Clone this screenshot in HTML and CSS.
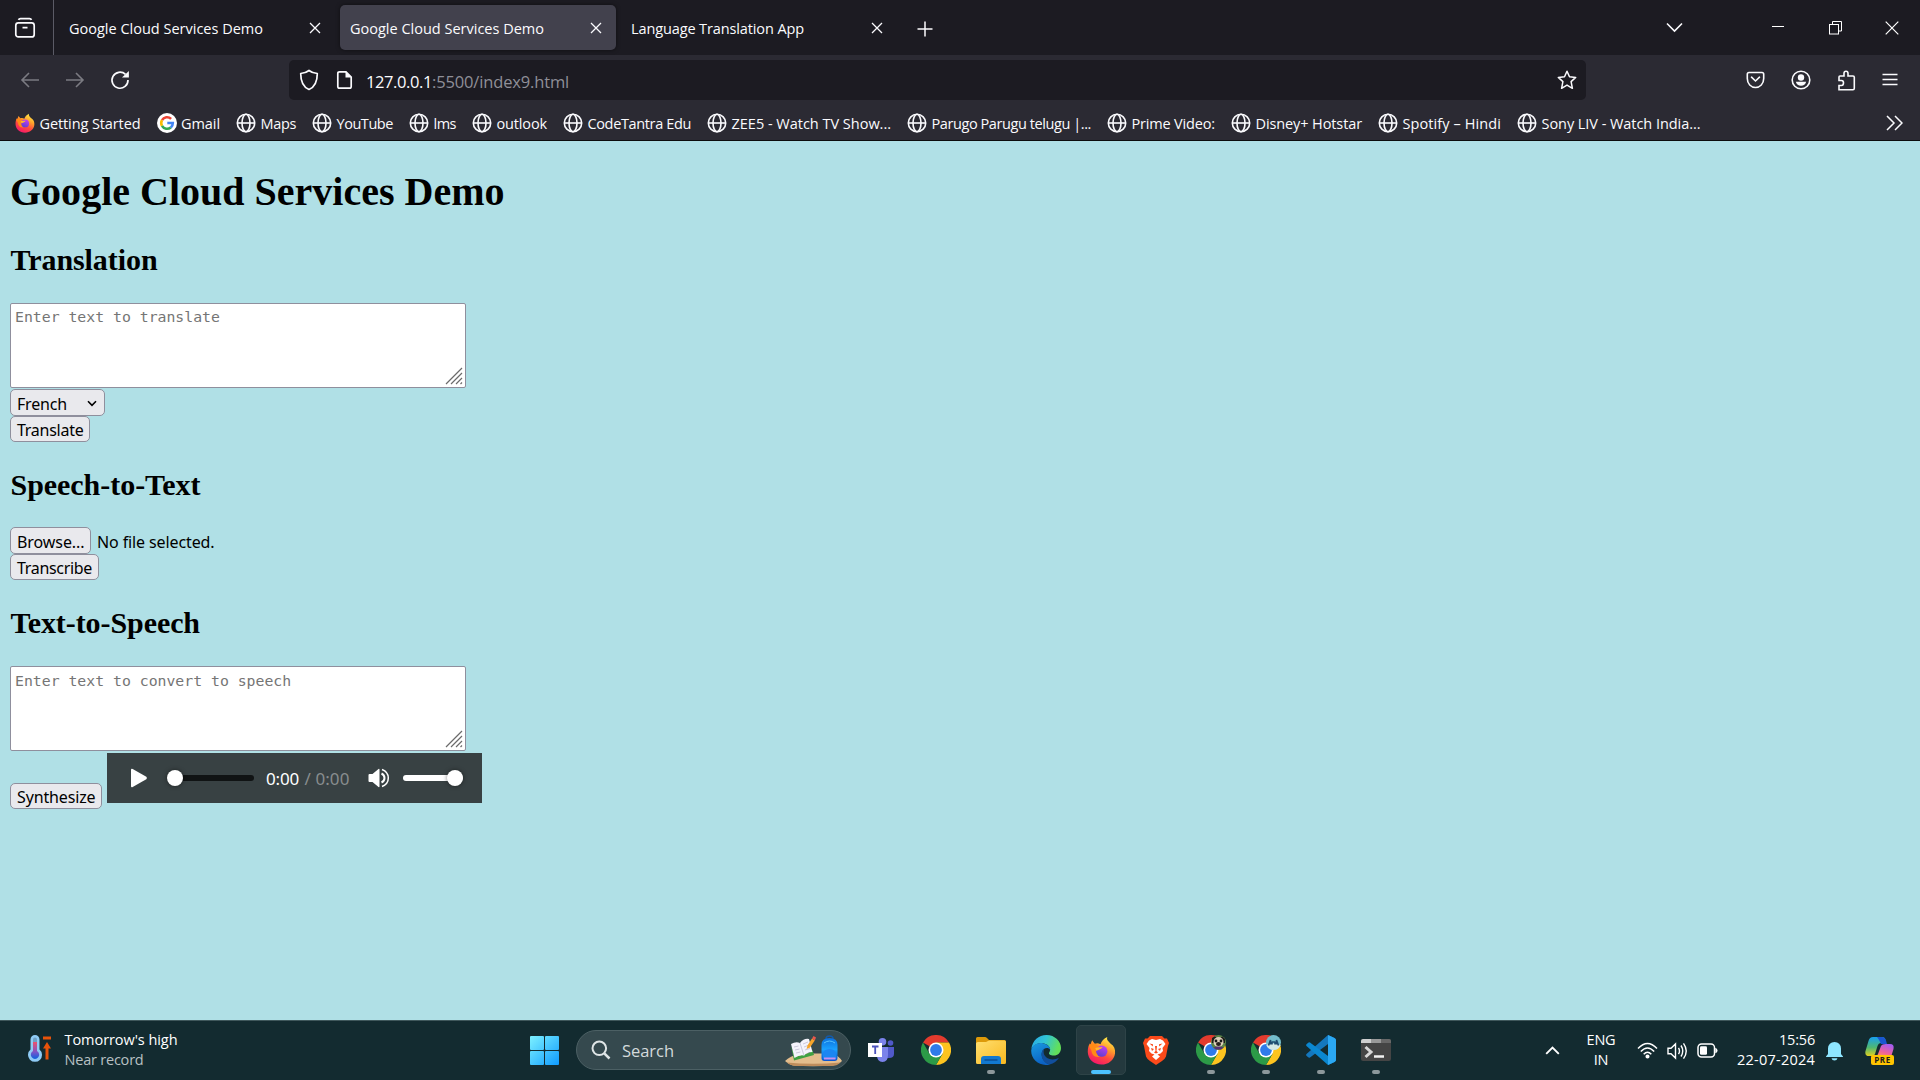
FILE: index.html
```html
<!DOCTYPE html>
<html lang="en">
<head>
<meta charset="utf-8">
<title>Google Cloud Services Demo</title>
<link rel="stylesheet" href="styles.css">
</head>
<body>
<svg class="defs" width="0" height="0" aria-hidden="true">
  <defs>
    <linearGradient id="ffBody" x1="0.8" y1="0" x2="0.3" y2="1"><stop offset="0" stop-color="#fff44f"/><stop offset="0.35" stop-color="#ffa42b"/><stop offset="0.65" stop-color="#ff4b3e"/><stop offset="1" stop-color="#f5156c"/></linearGradient>
    <linearGradient id="ffCore" x1="0.7" y1="0" x2="0.3" y2="1"><stop offset="0" stop-color="#c43df0"/><stop offset="1" stop-color="#5b3fd0"/></linearGradient>
    <linearGradient id="winFill" gradientUnits="userSpaceOnUse" x1="0" y1="0" x2="29" y2="29"><stop offset="0" stop-color="#7df1ff"/><stop offset="1" stop-color="#0f9bff"/></linearGradient>
    <linearGradient id="folderFill" x1="0" y1="0" x2="1" y2="1"><stop offset="0" stop-color="#ffdf70"/><stop offset="1" stop-color="#f9b91f"/></linearGradient>
    <linearGradient id="edgeTop" x1="0" y1="0" x2="1" y2="0.3"><stop offset="0" stop-color="#28a8e8"/><stop offset="0.5" stop-color="#31c4d6"/><stop offset="1" stop-color="#62e05a"/></linearGradient>
    <linearGradient id="edgeLow" x1="0" y1="0" x2="0.4" y2="1"><stop offset="0" stop-color="#1a9be0"/><stop offset="1" stop-color="#0b62c4"/></linearGradient>
    <linearGradient id="thermo" x1="0" y1="0" x2="0" y2="1"><stop offset="0" stop-color="#f0506a"/><stop offset="0.6" stop-color="#7a55c8"/><stop offset="1" stop-color="#0a62e0"/></linearGradient>
    <linearGradient id="pilotA" x1="0" y1="0" x2="0" y2="1"><stop offset="0" stop-color="#18a0f0"/><stop offset="0.55" stop-color="#4fb872"/><stop offset="1" stop-color="#e0d020"/></linearGradient>
    <linearGradient id="pilotB" x1="0.7" y1="0" x2="0.2" y2="1"><stop offset="0" stop-color="#a45cf0"/><stop offset="0.6" stop-color="#f0629a"/><stop offset="1" stop-color="#ff9a50"/></linearGradient>
    <linearGradient id="bag" x1="0" y1="0" x2="0" y2="1"><stop offset="0" stop-color="#0b6fdc"/><stop offset="0.5" stop-color="#1ba2ff"/><stop offset="1" stop-color="#0a52d0"/></linearGradient>
    <symbol id="globe" viewBox="0 0 20 20"><g fill="none" stroke="#fbfbfe" stroke-width="1.6"><circle cx="10" cy="10" r="8.7"/><ellipse cx="10" cy="10" rx="4" ry="8.7"/><path d="M1.3 10h17.4"/></g></symbol>
    <symbol id="firefox" viewBox="0 0 30 30"><path d="M21 1C20 4 22 5 24.500 8C28 10 29.500 14 29 18C28 25 22 29.500 15 29.500C7 29.500 1 24 .8 16.500C.7 12 2 9 3 7.500V10L5.300 4.500L8 8C10 7.200 12 7.300 14 8.500C15 5 17.500 2.500 21 1Z" fill="url(#ffBody)"/><path d="M2 10C4 7 8 7 11 10L15 11C14 14 11 13 9.500 15C9 18 11 20 14 21C9 23 5 20 4.500 15Z" fill="#ff8a16"/><circle cx="15.300" cy="15.700" r="5.800" fill="url(#ffCore)"/><path d="M8.500 13C10 11 13 12 16 11.500C15.500 13.500 12 14 10 15.500Z" fill="#ffb52e"/></symbol>
    <symbol id="chrome" viewBox="0 0 30 30"><path d="M15 15L2 7.500A15 15 0 0 1 28 7.500H15Z" fill="#e33b2e"/><path d="M15 7.500H28A15 15 0 0 1 15 30L21.500 18.800Z" fill="#fdc41f"/><path d="M2 7.500L8.500 18.800L21.500 18.800L15 30A15 15 0 0 1 2 7.500Z" fill="#2c9a47"/><circle cx="15" cy="15" r="7.500" fill="#fff"/><circle cx="15" cy="15" r="5.900" fill="#2f7bea"/></symbol>
    <symbol id="cross" viewBox="0 0 12 12"><path d="M1 1L11 11M11 1L1 11" fill="none" stroke="#fbfbfe" stroke-width="1.300"/></symbol>
    <symbol id="grip" viewBox="0 0 18 18"><path d="M1 17L17 1M6 17L17 6M11 17L17 11M15.500 17L17 15.500" fill="none" stroke="#6b6b6b" stroke-width="1.200"/></symbol>
  </defs>
</svg>

<header class="browser">
  <div class="tabstrip">
    <div class="view-btn"><svg width="22" height="22" viewBox="0 0 22 22" fill="none" stroke="#fbfbfe" stroke-width="1.700"><rect x="1.800" y="5.900" width="18.400" height="14" rx="2.500"/><path d="M4.500 2.800Q5 1.600 6.500 1.600H15.500Q17 1.600 17.500 2.800M8.500 10.600H13.500"/></svg></div>
    <div class="tab"><span data-w="194">Google Cloud Services Demo</span><svg class="x" width="12" height="12"><use href="#cross"/></svg></div>
    <div class="tab active"><span data-w="194">Google Cloud Services Demo</span><svg class="x" width="12" height="12"><use href="#cross"/></svg></div>
    <div class="tab"><span data-w="173">Language Translation App</span><svg class="x" width="12" height="12"><use href="#cross"/></svg></div>
    <svg class="plus" width="16" height="16" viewBox="0 0 16 16"><path d="M8 .5V15.500M.5 8H15.500" stroke="#fbfbfe" stroke-width="1.500"/></svg>
    <div class="window-btns">
      <svg width="17" height="11" viewBox="0 0 17 11"><path d="M1 1.500L8.500 9L16 1.500" fill="none" stroke="#fbfbfe" stroke-width="1.600"/></svg>
      <svg class="min" width="12" height="14" viewBox="0 0 12 14"><path d="M0 5.500H12" stroke="#fff"/></svg>
      <svg class="restore" width="13" height="14" viewBox="0 0 13 14" fill="none" stroke="#fff"><rect x=".5" y="3.500" width="9" height="9.500"/><path d="M3.500 3.500V.5H12.500V10H9.500"/></svg>
      <svg class="close" width="14" height="14" viewBox="0 0 14 14"><path d="M.7.7L13.300 13.300M13.300.7L.7 13.300" stroke="#fff" stroke-width="1.200"/></svg>
    </div>
  </div>

  <div class="toolbar">
    <svg width="20" height="20" viewBox="0 0 20 20" fill="none" stroke="#7b7b82" stroke-width="1.600"><path d="M19 10H2M9 3L2 10L9 17"/></svg>
    <svg class="fwd" width="20" height="20" viewBox="0 0 20 20" fill="none" stroke="#7b7b82" stroke-width="1.600"><path d="M1 10H18M11 3L18 10L11 17"/></svg>
    <svg class="reload" width="20" height="20" viewBox="0 0 20 20"><path d="M15.500 4.400A8 8 0 1 0 18 10" fill="none" stroke="#fbfbfe" stroke-width="1.700"/><path d="M18.900 1V7.500H12Z" fill="#fbfbfe"/></svg>
    <div class="urlbar">
      <svg width="20" height="22" viewBox="0 0 20 22"><path d="M10 1.500C12.500 3.500 15.500 4.300 18.300 4.500C18.300 12.500 16 18 10 20.500C4 18 1.700 12.500 1.700 4.500C4.500 4.300 7.500 3.500 10 1.500Z" fill="none" stroke="#fbfbfe" stroke-width="1.700" stroke-linejoin="round"/></svg>
      <svg class="doc" width="17" height="20" viewBox="0 0 17 20"><path d="M3.500 1.800H10L15.200 7V16.500Q15.200 18.200 13.500 18.200H3.500Q1.800 18.200 1.800 16.500V3.500Q1.800 1.800 3.500 1.800Z" fill="none" stroke="#fbfbfe" stroke-width="1.700"/><path d="M9.500 1.500V7.500H15.500Z" fill="#fbfbfe"/></svg>
      <span class="host" data-w="66">127.0.0.1</span><span class="path" data-w="137">:5500/index9.html</span>
      <svg class="star" width="20" height="20" viewBox="0 0 20 20"><path d="M10 1.300L12.500 6.700L18.700 7.400L14.100 11.600L15.400 18.300L10 15.100L4.600 18.300L5.900 11.600L1.300 7.400L7.500 6.700Z" fill="none" stroke="#fbfbfe" stroke-width="1.500" stroke-linejoin="round"/></svg>
    </div>
    <div class="actions">
      <svg width="19" height="18" viewBox="0 0 19 18" fill="none" stroke="#fbfbfe" stroke-width="1.600"><path d="M3 1.500H16Q17.700 1.500 17.700 3.200V7.500C17.700 13 14 16.500 9.500 16.500C5 16.500 1.300 13 1.300 7.500V3.200Q1.300 1.500 3 1.500Z"/><path d="M5.500 6.200L9.500 10L13.500 6.200" stroke-linecap="round"/></svg>
      <svg width="20" height="20" viewBox="0 0 20 20"><circle cx="10" cy="10" r="8.800" fill="none" stroke="#fbfbfe" stroke-width="1.600"/><circle cx="10" cy="7.500" r="3.200" fill="#fbfbfe"/><path d="M4.800 11.800H15.200Q14 15.700 10 15.700Q6 15.700 4.800 11.800Z" fill="#fbfbfe"/></svg>
      <svg width="19" height="21" viewBox="0 0 19 21"><path d="M2 19.700V15.500H4.500Q6.500 15.500 6.500 12.800Q6.500 10.500 4.500 10.500H2V7Q2 6 3 6H7V3.300Q7 1.200 9 1.200Q11 1.200 11 3.300V6H16Q17.300 6 17.300 7.300V18.200Q17.300 19.700 16 19.700Z" fill="none" stroke="#fbfbfe" stroke-width="1.600"/></svg>
      <svg width="16" height="14" viewBox="0 0 16 14"><path d="M.5 1.500H15.500M.5 6.500H15.500M.5 11.500H15.500" stroke="#fbfbfe" stroke-width="1.400"/></svg>
    </div>
  </div>

  <nav class="bookmarks">
    <a><svg width="20" height="20"><use href="#firefox"/></svg><span data-w="101">Getting Started</span></a>
    <a><svg width="20" height="20" viewBox="0 0 20 20"><circle cx="10" cy="10" r="10" fill="#fff"/><g fill="none" stroke-width="2.600"><path d="M14.100 5.900A5.800 5.800 0 0 0 5 7.200" stroke="#ea4335"/><path d="M5 7.200A5.800 5.800 0 0 0 5 12.900" stroke="#fbbc05"/><path d="M5 12.900A5.800 5.800 0 0 0 13.800 14.400" stroke="#34a853"/><path d="M13.800 14.400A5.800 5.800 0 0 0 15.800 10H10.300" stroke="#4285f4"/></g></svg><span data-w="39">Gmail</span></a>
    <a><svg width="20" height="20"><use href="#globe"/></svg><span data-w="35.500">Maps</span></a>
    <a><svg width="20" height="20"><use href="#globe"/></svg><span data-w="56.500">YouTube</span></a>
    <a><svg width="20" height="20"><use href="#globe"/></svg><span data-w="22.500">lms</span></a>
    <a><svg width="20" height="20"><use href="#globe"/></svg><span data-w="50.500">outlook</span></a>
    <a><svg width="20" height="20"><use href="#globe"/></svg><span data-w="103.500">CodeTantra Edu</span></a>
    <a><svg width="20" height="20"><use href="#globe"/></svg><span data-w="159.500">ZEE5 - Watch TV Show...</span></a>
    <a><svg width="20" height="20"><use href="#globe"/></svg><span data-w="159.500">Parugo Parugu telugu |...</span></a>
    <a><svg width="20" height="20"><use href="#globe"/></svg><span data-w="83.500">Prime Video:</span></a>
    <a><svg width="20" height="20"><use href="#globe"/></svg><span data-w="106.500">Disney+ Hotstar</span></a>
    <a><svg width="20" height="20"><use href="#globe"/></svg><span data-w="98.500">Spotify – Hindi</span></a>
    <a><svg width="20" height="20"><use href="#globe"/></svg><span data-w="159">Sony LIV - Watch India...</span></a>
    <svg class="more" width="17" height="16" viewBox="0 0 17 16"><path d="M1 1L8 8L1 15M9 1L16 8L9 15" fill="none" stroke="#fbfbfe" stroke-width="1.500"/></svg>
  </nav>
</header>

<main class="page">
  <h1><span data-w="494.500">Google Cloud Services Demo</span></h1>
  <h2><span data-w="147">Translation</span></h2>
  <div class="area"><textarea class="first" placeholder="Enter text to translate"></textarea><svg class="grip" width="18" height="18"><use href="#grip"/></svg></div>
  <button class="ctl select"><span data-w="50">French</span><svg width="10" height="7" viewBox="0 0 10 7"><path d="M1 1.200L5 5.300L9 1.200" fill="none" stroke="#000" stroke-width="1.600"/></svg></button>
  <button class="ctl translate"><span data-w="66.500">Translate</span></button>
  <h2 class="speech"><span data-w="190">Speech-to-Text</span></h2>
  <div class="file"><button class="ctl browse"><span data-w="67.500">Browse...</span></button><span class="status" data-w="117.500">No file selected.</span></div>
  <button class="ctl transcribe"><span data-w="75">Transcribe</span></button>
  <h2><span data-w="189.500">Text-to-Speech</span></h2>
  <div class="area"><textarea placeholder="Enter text to convert to speech"></textarea><svg class="grip" width="18" height="18"><use href="#grip"/></svg></div>
  <div class="synth">
    <button class="ctl synthesize"><span data-w="78.500">Synthesize</span></button>
    <div class="player">
      <svg width="18" height="20" viewBox="0 0 18 20"><path d="M1 2Q1 .3 2.700 1L16.300 8.800Q17.600 10 16.300 11.200L2.700 19Q1 19.700 1 18Z" fill="#fff"/></svg>
      <div class="scrub"><i class="knob"></i></div>
      <span class="now" data-w="33">0:00</span><span class="total" data-w="45">/ 0:00</span>
      <svg class="speaker" width="22" height="20" viewBox="0 0 22 20"><path d="M1.500 6H4.500L10.500 1Q11.500.5 11.500 1.700V18.300Q11.500 19.500 10.500 19L4.500 14H1.500Q.5 14 .5 13V7Q.5 6 1.500 6Z" fill="#fff"/><path d="M13.500 5.500Q16.500 7 16.500 10Q16.500 13 13.500 14.500" fill="none" stroke="#fff" stroke-width="2"/><path d="M14 1.500Q20.300 4 20.300 10Q20.300 16 14 18.500" fill="none" stroke="#fff" stroke-width="1.500"/></svg>
      <div class="volume"><i class="knob"></i></div>
    </div>
  </div>
</main>

<footer class="taskbar">
  <div class="weather">
    <svg width="24" height="30" viewBox="0 0 24 30"><path d="M2.500 5.500A4.500 4.500 0 0 1 11.500 5.500V15.500A7 7 0 1 1 2.500 15.500Z" fill="#8fcbf5"/><rect x="5" y="3.500" width="4" height="8" rx="2" fill="#6fa0c4"/><path d="M5 8H9V17A4.200 4.200 0 1 1 5 17Z" fill="url(#thermo)"/><path d="M15 4H23" stroke="#e8530a" stroke-width="3"/><path d="M19 8L23 14.500H20.500V25.500H17.500V14.500H15Z" fill="#e8530a"/></svg>
    <div class="lines"><span data-w="113">Tomorrow's high</span><span class="dim" data-w="79">Near record</span></div>
  </div>
  <svg class="start" width="29" height="29" viewBox="0 0 29 29" fill="url(#winFill)"><rect width="14" height="14" rx="1"/><rect x="15" width="14" height="14" rx="1"/><rect y="15" width="14" height="14" rx="1"/><rect x="15" y="15" width="14" height="14" rx="1"/></svg>
  <div class="search">
    <svg width="20" height="20" viewBox="0 0 20 20" fill="none" stroke="#dfe5e6" stroke-width="2"><circle cx="8.300" cy="8.300" r="6.800"/><path d="M13.300 13.300L18.500 18.500" stroke-width="2.500"/></svg>
    <span data-w="52">Search</span>
    <svg class="art" width="58" height="32" viewBox="0 0 58 32"><path d="M0 26Q5 21 14 19Q20 18 30 18.500H48Q54 21 57 26Q54 29 48 30.500Q28 32 8 30.500Q3 29 0 26Z" fill="#e3bd8d"/><path d="M1.500 27.500Q28 30 55.500 27.500Q52 31 46 31H10Q5 30 1.500 27.500Z" fill="#bf8d5c"/><path d="M6 11L9 25.500L29 20L27.500 15L24 18L10 22Z" fill="#3fa142"/><path d="M6 9Q11 6 15 8Q19 3 24 4L27.500 17Q22 17 19 20.500Q14 19.500 9.500 23Z" fill="#f4f3fb"/><path d="M15 8L19 20.500M9 12L13.500 11M10 15L14.500 14M11 18L15.500 17M18 9L23 7M19 12L24 10M20 15L25 13.500" stroke="#c6c3d6" stroke-width=".9"/><path d="M21.500 14L22.500 10.500L27 3.500L29.800 5.500L25 12.500Z" fill="#f6a52b"/><path d="M27 3.500L28.500 1L31 2.500L29.800 5.500Z" fill="#e9574c"/><path d="M41 4Q41 1 44.500 1Q48 1 48 4" fill="none" stroke="#145aa8" stroke-width="1.500"/><path d="M36.500 10Q36.500 3 44.500 3Q52.500 3 52.500 10V23Q52.500 26 49.500 26H39.500Q36.500 26 36.500 23Z" fill="url(#bag)"/><path d="M38 20Q38 14 44.500 14Q51 14 51 20V24H38Z" fill="#1c86f2"/><path d="M39 8Q44.500 4 50 8" fill="none" stroke="#58c4ff"/><path d="M39 23.500H50.500" stroke="#c590f0" stroke-width="2"/></svg>
  </div>
  <div class="apps">
    <div class="app"><svg width="26" height="24" viewBox="0 0 26 24"><circle cx="22.500" cy="5" r="2.800" fill="#5059c9"/><path d="M19 9H26V16Q26 20 21 20H19Z" fill="#5059c9"/><circle cx="14.500" cy="3.800" r="3.800" fill="#7b83eb"/><path d="M9 9H20V17Q20 24 14.500 24Q9 24 9 17Z" fill="#7b83eb"/><rect y="5" width="14" height="14" fill="#fff"/><path d="M4 8.500H10.500M7.200 8.500V16" stroke="#4b53bc" stroke-width="1.800"/></svg></div>
    <div class="app"><svg width="30" height="30"><use href="#chrome"/></svg></div>
    <div class="app run"><svg width="30" height="27" viewBox="0 0 30 27"><path d="M0 1.500Q0 0 1.500 0H9Q10 0 11 1L13 3H28.500Q30 3 30 5V10H0Z" fill="#dd9a0a"/><path d="M0 6.500Q0 5 2 5H10L13 3.500H28.500Q30 3.500 30 5V25.500Q30 27 28.500 27H1.500Q0 27 0 25.500Z" fill="url(#folderFill)"/><path d="M5 22Q5 19 8 19H22Q25 19 25 22V27H5Z" fill="#1279d0"/><path d="M8.500 23H21.500" stroke="#0b4f96" stroke-width="1.500"/></svg></div>
    <div class="app"><svg width="30" height="30" viewBox="0 0 30 30"><path d="M.3 14C1.500 5.500 7.500 0 15.500 0C24 0 30 6.500 30 13C30 18 26.500 20.500 23 20.500C19 20.500 17 19 18.500 17C20 14.500 19 10 13 8.500C8 7.500 2.500 9.500.3 14Z" fill="url(#edgeTop)"/><path d="M.2 15.500C1 10 7 7 12.500 8.500C17 9.500 19.500 12.500 19.200 15C17.500 12 12.500 12.500 11 17C9.500 22 13.500 28.500 19 29.400C9 32 0 25 .2 15.500Z" fill="url(#edgeLow)"/><path d="M10.800 17.500C9.500 23.500 14 28.500 18.500 29.500C23 28.500 26 26 28 22.800C22 26 14.500 24.500 12.800 18.500C12.200 16 13 13.800 14 12.800C12.300 13.800 11.300 15.500 10.800 17.500Z" fill="#114f9c"/></svg></div>
    <div class="app current"><svg width="29" height="29"><use href="#firefox"/></svg></div>
    <div class="app"><svg width="26" height="30" viewBox="0 0 26 30"><path d="M7 1H19L21.500 3.500L24 3.500L26 8L25 11L23 21.500Q22 24 19 26L13 30L7 26Q4 24 3 21.500L1 11L0 8L2 3.500L4.500 3.500Z" fill="#fb4a1a"/><path d="M13 5L17 4L20 5.500L22.500 9L19.500 13L20 16L17.500 18.500L14.500 19.500L17 21.500L13 25L9 21.500L11.500 19.500L8.500 18.500L6 16L6.500 13L3.500 9L6 5.500L9 4Z" fill="#fff"/><path d="M6.500 8.500L10 9.200L9.800 11.500ZM19.500 8.500L16 9.200L16.200 11.500ZM8 13L11 14L9 16ZM18 13L15 14L17 16ZM12 11H14L13.500 16L15 17.500L13 18.500L11 17.500L12.500 16Z" fill="#fb4a1a"/></svg></div>
    <div class="app run"><svg width="30" height="30" viewBox="0 0 30 30"><use href="#chrome" width="30" height="30"/><circle cx="22.500" cy="7.500" r="7.500" fill="#5b8446"/><path d="M16 3L18.500 1.500L22.500 3L26.500 1.500L29 4V8H16Z" fill="#1e1d1c"/><ellipse cx="22.500" cy="7" rx="5" ry="5" fill="#dccfb9"/><circle cx="20" cy="6" r="1.400" fill="#171717"/><circle cx="25" cy="6" r="1.400" fill="#171717"/><ellipse cx="22.500" cy="9" rx="2.500" ry="2" fill="#28211e"/><path d="M17.500 12.500Q22.500 10.500 27.500 12.500L25 14.500H20Z" fill="#563273"/></svg></div>
    <div class="app run"><svg width="30" height="30" viewBox="0 0 30 30"><use href="#chrome" width="30" height="30"/><circle cx="22.500" cy="7.500" r="7.500" fill="#74bccb"/><path d="M15.300 10Q22.500 7 29.700 10Q28 15 22.500 15Q17 15 15.300 10Z" fill="#d4e9e7"/><path d="M17.500 10.500L19.500 5V9.500M21 6.500V9.500M27.500 10.500L25.500 5V9.500M24 6.500V9.500M21 7H24" stroke="#1f4c70" stroke-width="1.600" fill="none"/></svg></div>
    <div class="app run"><svg width="30" height="30" viewBox="0 0 30 30"><path d="M22 0L28.500 3Q30 3.800 30 5V8L22 9L4 22.500Q3 23 2.200 22.300L.5 20.800Q-.3 20 .5 19Z" fill="#1477bd"/><path d="M22 30L28.500 27Q30 26.200 30 25V22L22 21L4 7.500Q3 7 2.200 7.700L.5 9.200Q-.3 10 .5 11Z" fill="#0b87d0"/><path d="M22 0L28.500 3Q30 3.800 30 5V25Q30 26.200 28.500 27L22 30Z" fill="#2ba8f3"/></svg></div>
    <div class="app run"><svg width="30" height="22" viewBox="0 0 30 22"><rect width="30" height="22" rx="2" fill="#454545"/><path d="M0 4V2Q0 0 2 0H10V4Z" fill="#cfcfcf"/><path d="M10 0H20V4H10Z" fill="#999"/><path d="M20 0H28Q30 0 30 2V4H20Z" fill="#686868"/><path d="M4.500 8L10 13L4.500 18" fill="none" stroke="#d7d7d7" stroke-width="3"/><path d="M13 17.500H23" stroke="#f2f2f2" stroke-width="2.500"/></svg></div>
  </div>
  <div class="tray">
    <svg class="caret" width="15" height="9" viewBox="0 0 15 9"><path d="M1.200 7.800L7.500 1.500L13.800 7.800" fill="none" stroke="#fff" stroke-width="1.900"/></svg>
    <div class="lang"><span data-w="29">ENG</span><span data-w="14.500">IN</span></div>
    <svg class="wifi" width="21" height="17" viewBox="0 0 21 17" fill="none" stroke="#fff" stroke-width="1.500"><path d="M1 6.500Q10.500-3.500 20 6.500M3.800 9.500Q10.500 2.300 17.200 9.500M6.700 12.300Q10.500 8 14.300 12.300"/><circle cx="10.500" cy="14.500" r="1.300" fill="#fff"/></svg>
    <svg class="sound" width="21" height="18" viewBox="0 0 21 18" fill="none" stroke="#fff" stroke-width="1.400"><path d="M1 6.300H4L8.500 2V16L4 11.700H1ZM11.500 5.800Q13.500 9 11.500 12.200M14 3.500Q17.500 9 14 14.500M16.500 1.300Q22 9 16.500 16.700"/></svg>
    <svg class="battery" width="21" height="15" viewBox="0 0 21 15"><rect x="1" y="1" width="16.500" height="13" rx="3.500" fill="none" stroke="#fff" stroke-width="1.500"/><rect x="3" y="3.300" width="7" height="8.400" rx="1.300" fill="#fff"/><path d="M18.300 5H19Q20.500 6 20.500 7.500Q20.500 9 19 10H18.300Z" fill="#fff"/></svg>
    <div class="clock"><span data-w="36">15:56</span><span data-w="78">22-07-2024</span></div>
    <svg class="bell" width="17" height="20" viewBox="0 0 17 20" fill="#8ee6ff"><path d="M2 13V7.500Q2.500 1 8.500 1Q14.500 1 15 7.500V13L17 15.500V16H0V15.500Z"/><path d="M5.500 17.200H11.500Q11 19.500 8.500 19.500Q6 19.500 5.500 17.200Z"/></svg>
    <div class="copilot">
      <svg width="30" height="29" viewBox="0 0 30 29"><path d="M8 1H17Q20 1 20.500 4L21 7H16Q13.500 7 12.500 10L10 18Q9.500 20 7 20H4Q-.5 20 .5 15L3.500 5Q4.500 1 8 1Z" fill="url(#pilotA)"/><path d="M12 1H17Q20 1 21 4.500L22 8H16Q14.500 4 12 1Z" fill="#1a56d0"/><path d="M21 8H25Q29.500 8 28.500 13L26 21H9Q12 21 13 18L16 10Q17 8 21 8Z" fill="url(#pilotB)"/></svg>
      <span class="pre">PRE</span>
    </div>
  </div>
</footer>
<script src="fit.js"></script>
</body>
</html>
```
FILE: styles.css
```css
* { box-sizing: border-box; }

body {
  margin: 0;
  width: 1920px;
  height: 1080px;
  overflow: hidden;
  display: flex;
  flex-direction: column;
  background: #b0e0e6;
  font-family: "Open Sans", "Noto Sans", sans-serif;
  font-size: 14.5px;
  color: #fbfbfe;
}

svg { display: block; flex: none; }
span { white-space: nowrap; }
.defs { position: absolute; }

/* Browser chrome */
.browser {
  height: 141px;
  flex: none;
  background: #2b2a33;
  border-bottom: 1px solid #0c0c0d;
}
.tabstrip {
  height: 55px;
  display: flex;
  align-items: center;
  background: #1c1b22;
}
.view-btn {
  width: 54px;
  height: 55px;
  padding: 17px 0 0 14px;
  border-right: 1px solid #5b5b66;
}
.tab {
  width: 276px;
  height: 45px;
  margin-left: 5px;
  padding: 0 14px 0 10px;
  display: flex;
  align-items: center;
  justify-content: space-between;
  border-radius: 5px;
}
.tab span { line-height: 20px; padding-top: 3px; }
.active { background: #42414d; box-shadow: 0 0 4px rgba(0, 0, 0, 0.5); }
.plus { margin-left: 20px; margin-top: 2px; }
.window-btns {
  display: flex;
  align-items: center;
  margin-left: auto;
  padding-right: 21px;
}
.min { margin-left: 89px; }
.restore { margin-left: 45px; }
.close { margin-left: 43px; }

.toolbar {
  height: 50px;
  display: flex;
  align-items: center;
  padding-left: 20px;
}
.fwd { margin-left: 25px; }
.reload { margin-left: 25px; }
.urlbar {
  width: 1297px;
  height: 40px;
  margin-left: 159px;
  padding: 0 9px 0 10px;
  display: flex;
  align-items: center;
  border-radius: 5px;
  background: #1c1b22;
  font-size: 16.5px;
}
.doc { margin-left: 17px; }
.host { margin-left: 13px; padding-top: 3px; }
.path { color: #8f8f98; padding-top: 3px; }
.star { margin-left: auto; }
.actions { display: flex; align-items: center; gap: 26px; margin-left: 160px; }
.actions svg:last-child { margin-left: 0; }

.bookmarks {
  height: 35px;
  display: flex;
  align-items: center;
  gap: 16px;
  padding: 1px 17px 0 15px;
}
.bookmarks a { display: flex; align-items: center; gap: 4.5px; }
.more { margin-left: auto; }

/* Demo page */
.page {
  flex: 1;
  padding-left: 10px;
  color: #000;
  font-size: 16px;
  font-family: "Noto Sans", "Open Sans", sans-serif;
}
h1, h2 { font-family: "Liberation Serif", "Times New Roman", serif; }
h1 { margin: 28px 0; font-size: 40px; line-height: 46px; }
h2 { margin: 26px 0; padding-left: 0.5px; font-size: 30px; line-height: 34px; }
.speech { margin-bottom: 25px; }
h1 + h2 { margin-top: 0; }
.area { position: relative; width: 456px; height: 85px; }
textarea {
  display: block;
  width: 456px;
  height: 85px;
  padding: 5px 4px;
  border: 1px solid #8f8f9d;
  border-radius: 2px;
  resize: none;
  background: #fff;
  font: 14.8px/18px "DejaVu Sans Mono", monospace;
}
.first { padding-top: 4px; }
textarea::placeholder { color: #757575; opacity: 1; }
.grip { position: absolute; right: 3px; bottom: 3px; }
.ctl {
  height: 26px;
  display: flex;
  align-items: center;
  justify-content: space-between;
  padding: 1px 7px 0 6px;
  border: 1px solid #8f8f9d;
  border-radius: 5px;
  background: #e9e9ed;
  color: #000;
  font: 16px/22px "Noto Sans", "Open Sans", sans-serif;
}
.select { width: 95px; height: 27px; margin-top: 1px; }
.select span, .browse span, .status { padding-top: 2px; }
.translate { width: 80px; }
.file { height: 27px; display: flex; align-items: center; gap: 6px; }
.browse { width: 81px; height: 27px; }
.transcribe { width: 89px; }
.synthesize { width: 92px; }
.synth {
  height: 56px;
  margin-top: 2px;
  display: flex;
  align-items: flex-end;
  gap: 5px;
}
.player {
  width: 375px;
  height: 50px;
  align-self: flex-start;
  display: flex;
  align-items: center;
  padding-left: 23px;
  background: #384143;
  color: #fff;
  font-size: 17px;
}
.scrub, .volume { height: 6px; border-radius: 3px; display: flex; align-items: center; }
.scrub { width: 87px; margin-left: 19px; background: #101314; }
.volume { width: 60px; margin-left: 13px; background: #fff; justify-content: flex-end; }
.knob { width: 16px; height: 16px; border-radius: 50%; background: #fff; box-shadow: 0 0 4px rgba(0, 0, 0, 0.5); }
.now { margin-left: 12px; }
.total { margin-left: 5.5px; color: #888d8e; }
.speaker { margin-left: 18.5px; }

/* Taskbar */
.taskbar {
  height: 60px;
  flex: none;
  display: flex;
  background: #132b30;
  border-top: 1px solid #40585c;
  font-size: 14.5px;
  color: #fff;
}
.weather { width: 530px; display: flex; padding: 13px 0 0 28px; gap: 12.5px; }
.lines, .lang, .clock { display: flex; flex-direction: column; line-height: 20px; }
.lines { margin-top: -4px; align-items: flex-start; }
.dim { color: #b8c1c3; }
.start { margin-top: 15px; }
.search {
  width: 275px;
  height: 40px;
  margin: 9px 0 0 17px;
  padding: 0 7px 0 14px;
  display: flex;
  align-items: center;
  border-radius: 20px;
  border: 1px solid #4c6064;
  background: #35494e;
  color: #d3dadb;
  font-size: 16.5px;
}
.search span { margin-left: 11px; }
.art { margin-left: auto; margin-top: 2px; }
.apps { display: flex; gap: 5px; margin: 4px 0 0 5px; }
.app {
  width: 50px;
  height: 50px;
  display: flex;
  align-items: center;
  justify-content: center;
  position: relative;
  border-radius: 5px;
}
.current { background: #24393e; border: 1px solid #2e4347; }
.run::after, .current::after {
  content: "";
  position: absolute;
  left: 50%;
  bottom: 1px;
  width: 8px;
  height: 4px;
  margin-left: -4px;
  border-radius: 2px;
  background: #8c989b;
}
.current::after { bottom: 0; width: 20px; margin-left: -10px; background: #4cc2ff; }
.tray { display: flex; align-items: center; margin-left: auto; padding-right: 25px; }
.caret { margin-right: 26px; }
.lang { align-items: center; width: 30px; margin-right: 21px; }
.lang, .clock { margin-top: -1px; }
.sound { margin-left: 9px; }
.battery { margin-left: 9px; }
.clock { align-items: flex-end; width: 78px; margin-left: 19px; margin-right: 11px; }
.copilot { margin-left: 22px; position: relative; }
.pre {
  position: absolute;
  right: 1px;
  bottom: 0;
  width: 23px;
  height: 10px;
  border-radius: 2px;
  background: #ffc400;
  color: #1c1c1c;
  font: 700 8px/10px "Open Sans", sans-serif;
  letter-spacing: 0.5px;
  text-align: center;
}
```
FILE: fit.js
```js
// Spread each label's letters so that it fills its measured column width.
document.querySelectorAll("[data-w]").forEach(function (label) {
  var want = parseFloat(label.dataset.w);
  var range = document.createRange();
  range.selectNodeContents(label);
  var natural = range.getBoundingClientRect().width;
  var gap = (want - natural) / label.textContent.length;
  label.style.letterSpacing = gap.toFixed(3) + "px";
});
```
